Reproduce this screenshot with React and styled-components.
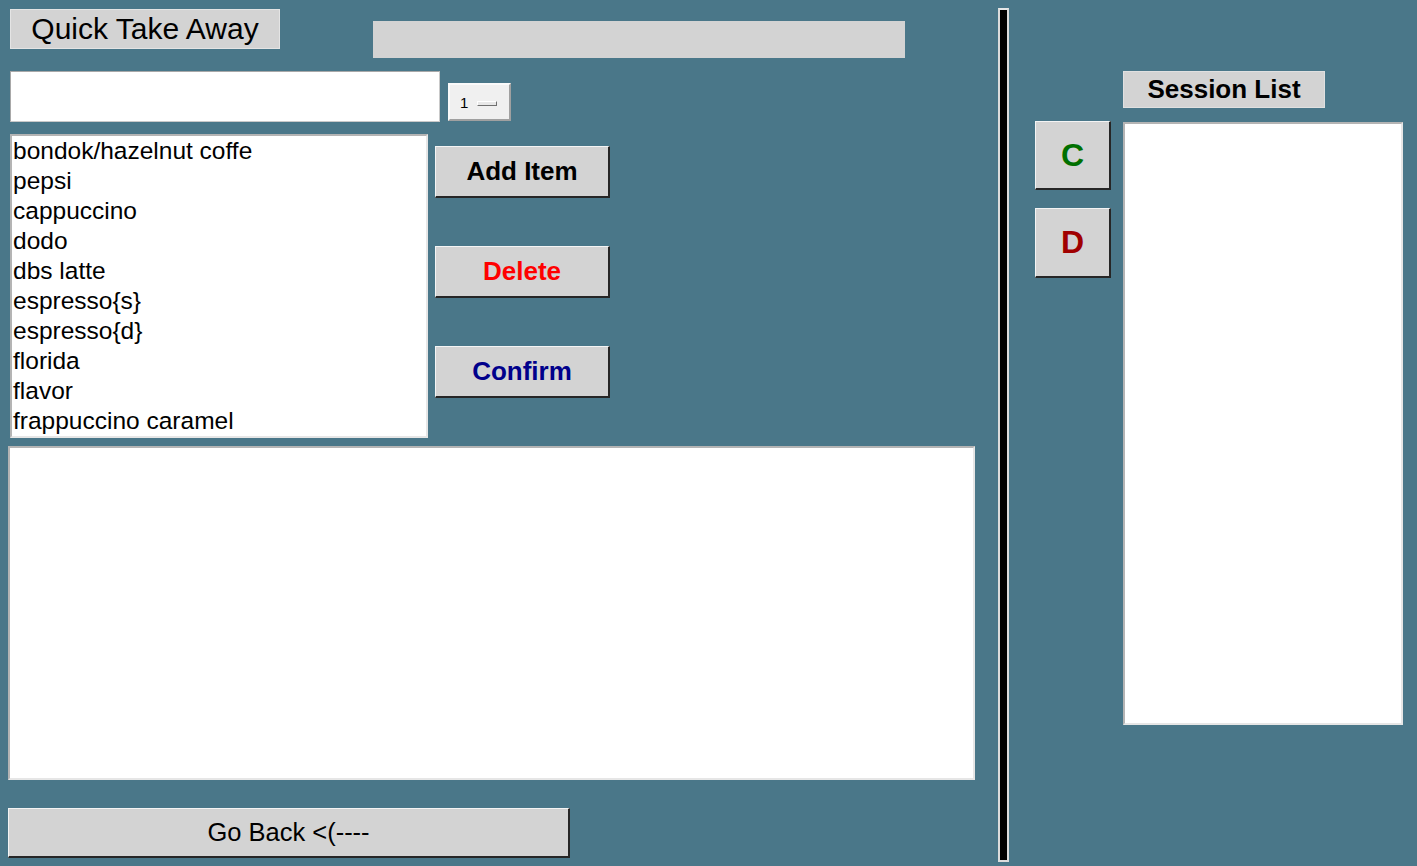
import styled, { createGlobalStyle } from 'styled-components';

const GlobalStyle = createGlobalStyle`
  html, body {
    margin: 0;
    padding: 0;
    background: #4a7789;
  }
  * { box-sizing: border-box; }
`;

const Window = styled.div`
  display: flex;
  width: 1417px;
  height: 866px;
  background: #4a7789;
  font-family: 'Liberation Sans', Arial, sans-serif;
  overflow: hidden;
`;

const LeftPane = styled.div`
  width: 998px;
  display: flex;
  flex-direction: column;
`;

const TopRow = styled.div`
  display: flex;
  align-items: flex-start;
  height: 71px;
`;

const TitleLabel = styled.div`
  margin: 9px 0 0 10px;
  width: 270px;
  height: 40px;
  background: #d3d3d3;
  border: 1px solid #e4e4e4;
  font-size: 30px;
  color: #000;
  display: flex;
  align-items: center;
  justify-content: center;
`;

const GrayBar = styled.div`
  margin: 21px 0 0 93px;
  width: 532px;
  height: 37px;
  background: #d3d3d3;
`;

const EntryRow = styled.div`
  display: flex;
  align-items: flex-start;
  height: 63px;
`;

const Entry = styled.div`
  margin-left: 10px;
  width: 430px;
  height: 51px;
  background: #fff;
  border: 1px solid #c9c9c9;
  border-top-color: #a8a8a8;
  border-left-color: #a8a8a8;
`;

const Spinbox = styled.div`
  margin: 12px 0 0 8px;
  width: 63px;
  height: 38px;
  background: #f0f0f0;
  border: 2px solid;
  border-color: #fafafa #a0a0a0 #a0a0a0 #fafafa;
  display: flex;
  align-items: center;
  padding-left: 10px;
  gap: 9px;
  font-size: 15px;
  color: #000;
`;

const SpinKnob = styled.span`
  width: 20px;
  height: 5px;
  background: #e8e8e8;
  border: 1px solid;
  border-color: #fff #707070 #707070 #fff;
  margin-top: 2px;
`;

const MiddleRow = styled.div`
  display: flex;
  align-items: flex-start;
  height: 312px;
`;

const ListBox = styled.div`
  margin-left: 10px;
  width: ${(p) => p.$w}px;
  height: ${(p) => p.$h}px;
  background: #fff;
  border: 2px solid;
  border-color: #b4b4b4 #e6e6e6 #e6e6e6 #b4b4b4;
  padding: 0 0 0 1px;
`;

const ListItem = styled.div`
  height: 30px;
  line-height: 30px;
  font-size: 24.5px;
  color: #000;
  white-space: nowrap;
`;

const ButtonColumn = styled.div`
  margin: 12px 0 0 7px;
  display: flex;
  flex-direction: column;
  gap: 48px;
`;

const RaisedButton = styled.div`
  width: ${(p) => p.$w}px;
  height: ${(p) => p.$h}px;
  background: #d3d3d3;
  border-style: solid;
  border-width: 1px 2px 2px 1px;
  border-color: #f4f4f4 #262626 #262626 #f4f4f4;
  display: flex;
  align-items: center;
  justify-content: center;
  font-size: ${(p) => p.$size}px;
  font-weight: ${(p) => (p.$bold ? 700 : 400)};
  color: ${(p) => p.$color || '#000'};
`;

const TextArea = styled.div`
  margin-left: 8px;
  width: 967px;
  height: 334px;
  background: #fff;
  border: 2px solid;
  border-color: #b4b4b4 #e6e6e6 #e6e6e6 #b4b4b4;
`;

const BottomRow = styled.div`
  margin: 28px 0 0 8px;
`;

const Separator = styled.div`
  margin-top: 8px;
  width: 11px;
  height: 854px;
  background: #000;
  border: 2px solid #e8e8e8;
  border-left-color: #dcdcdc;
  border-right-color: #dcdcdc;
  border-bottom-color: #dcdcdc;
`;

const RightPane = styled.div`
  display: flex;
  align-items: flex-start;
  padding-left: 26px;
`;

const SideButtons = styled.div`
  margin-top: 121px;
  display: flex;
  flex-direction: column;
  gap: 18px;
`;

const SessionColumn = styled.div`
  margin: 71px 0 0 12px;
  display: flex;
  flex-direction: column;
  gap: 14px;
`;

const SessionLabel = styled.div`
  width: 202px;
  height: 37px;
  background: #d3d3d3;
  border: 1px solid #e0e0e0;
  font-size: 26px;
  font-weight: 700;
  color: #000;
  display: flex;
  align-items: center;
  justify-content: center;
`;

const SessionBox = styled(ListBox)`
  margin-left: 0;
`;

const items = [
  'bondok/hazelnut coffe',
  'pepsi',
  'cappuccino',
  'dodo',
  'dbs latte',
  'espresso{s}',
  'espresso{d}',
  'florida',
  'flavor',
  'frappuccino caramel',
];

export default function App() {
  return (
    <Window>
      <GlobalStyle />
      <LeftPane>
        <TopRow>
          <TitleLabel>Quick Take Away</TitleLabel>
          <GrayBar />
        </TopRow>
        <EntryRow>
          <Entry />
          <Spinbox>
            1
            <SpinKnob />
          </Spinbox>
        </EntryRow>
        <MiddleRow>
          <ListBox $w={418} $h={304}>
            {items.map((it) => (
              <ListItem key={it}>{it}</ListItem>
            ))}
          </ListBox>
          <ButtonColumn>
            <RaisedButton $w={175} $h={52} $size={26} $bold>Add Item</RaisedButton>
            <RaisedButton $w={175} $h={52} $size={26} $bold $color="#ff0000">Delete</RaisedButton>
            <RaisedButton $w={175} $h={52} $size={26} $bold $color="#00008b">Confirm</RaisedButton>
          </ButtonColumn>
        </MiddleRow>
        <TextArea />
        <BottomRow>
          <RaisedButton $w={562} $h={50} $size={25.5}>Go Back &lt;(----</RaisedButton>
        </BottomRow>
      </LeftPane>
      <Separator />
      <RightPane>
        <SideButtons>
          <RaisedButton $w={76} $h={69} $size={32} $bold $color="#007000">C</RaisedButton>
          <RaisedButton $w={76} $h={70} $size={32} $bold $color="#a00000">D</RaisedButton>
        </SideButtons>
        <SessionColumn>
          <SessionLabel>Session List</SessionLabel>
          <SessionBox $w={280} $h={603} />
        </SessionColumn>
      </RightPane>
    </Window>
  );
}
